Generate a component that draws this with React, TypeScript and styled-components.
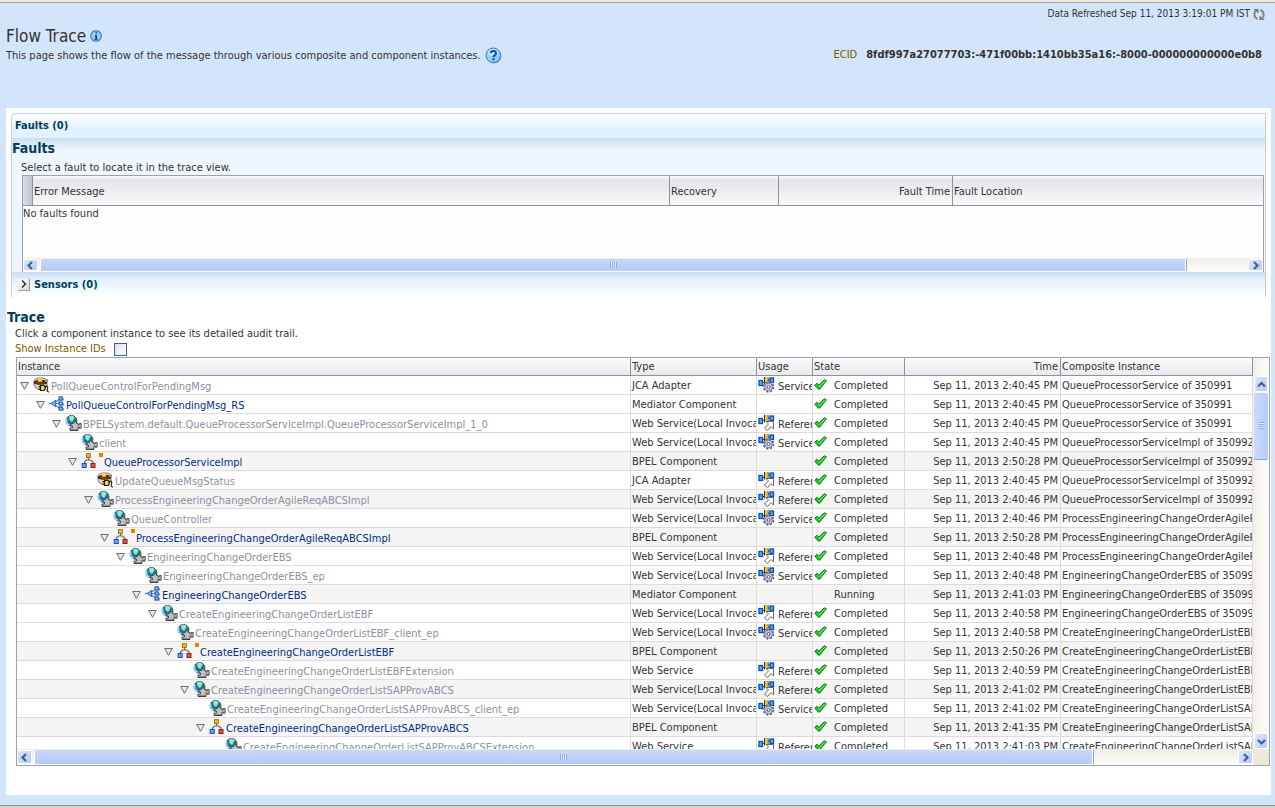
import React from 'react';
import styled, { createGlobalStyle } from 'styled-components';

const GlobalStyle = createGlobalStyle`
  *, *::before, *::after { box-sizing: border-box; }
  body {
    margin: 0;
    background: #d3e5fa;
    color: #333;
    font: 11px/14px "DejaVu Sans Condensed", "Noto Sans", sans-serif;
  }
  button {
    font: inherit;
    color: inherit;
    border: 0;
    padding: 0;
    margin: 0;
    background: none;
    cursor: pointer;
  }
  svg { display: block; flex: none; }
  h1, h2, h3, p { margin: 0; }
`;

/* ---------- page frame ---------- */

const Page = styled.div`
  display: flex;
  flex-direction: column;
  min-height: 100vh;
  border-top: 2px solid #ece9d8;
  border-bottom: 2px solid #d8d4c4;
`;

const Frame = styled.div`
  flex: 1;
  display: flex;
  flex-direction: column;
  border-top: 1px solid #a5a59c;
  border-bottom: 1px solid #8a8f94;
  padding: 0 4px 10px 6px;
`;

const Header = styled.header`
  display: flex;
  justify-content: space-between;
  height: 105px;
`;

const HeaderLeft = styled.div`
  padding-top: 22px;
`;

const HeaderRight = styled.div`
  display: flex;
  flex-direction: column;
  align-items: flex-end;
  gap: 26px;
  padding: 4px 6px 0 0;
`;

const Inline = styled.div<{ $gap: number }>`
  display: flex;
  align-items: center;
  gap: ${p => p.$gap}px;
`;

const Title = styled.h1`
  font: 17px/22px "DejaVu Sans Condensed", sans-serif;
`;

const Refreshed = styled.span`
  font-size: 10px;
`;

const EcidLine = styled.div`
  display: flex;
  gap: 9px;
  padding-right: 3px;
  line-height: 16px;
`;

const FieldLabel = styled.span`
  color: #7a5a00;
`;

const Panel = styled.main`
  flex: 1;
  background: #fff;
  padding: 5px 1px 28px 1px;
`;

/* ---------- faults ---------- */

const FaultsBox = styled.section`
  margin: 0 4px;
  border: 1px solid #c3d0df;
  border-bottom: 0;
  border-top-left-radius: 5px;
  background: #eff6fe;
`;

const BoxBar = styled.h3`
  height: 24px;
  padding-left: 3px;
  border-top-left-radius: 5px;
  font: bold 11px/24px "DejaVu Sans Condensed", sans-serif;
  color: #003d5b;
  background: linear-gradient(#fff, #e2f1fe 60%, #e2f1fe);
`;

const FaultsBody = styled.div`
  background: linear-gradient(#cadef1, #eff6fe 12px);
`;

const SectionTitle = styled.h2`
  font: bold 14px/20px "DejaVu Sans Condensed", sans-serif;
  color: #003d5b;
`;

const FaultsHint = styled.p`
  padding: 3px 0 0 9px;
`;

const TraceHint = styled.p`
  padding-left: 8px;
`;

const FaultsGrid = styled.div`
  margin: 0 1px 0 10px;
  border: 1px solid #9ba2ad;
  border-bottom: 0;
  background: #fdfdfb;
`;

const FaultsTable = styled.table`
  width: 100%;
  table-layout: fixed;
  border-collapse: separate;
  border-spacing: 0;
`;

const FaultsTh = styled.th<{ $end?: boolean }>`
  height: 30px;
  padding: 2px 2px 0 1px;
  font-weight: normal;
  text-align: ${p => (p.$end ? 'right' : 'left')};
  border-right: 1px solid #8d929b;
  border-bottom: 1px solid #8d929b;
  background: linear-gradient(#fafafb, #e4e5e9 15%, #f8f8f9);

  &:first-child { background: linear-gradient(90deg, #d9dce4, #bdc2cd); }
  &:last-child { border-right: 0; }
`;

const FaultsTd = styled.td`
  height: 52px;
  padding: 1px 0;
  vertical-align: top;
`;

const SensorsBar = styled.div`
  display: flex;
  align-items: center;
  gap: 4px;
  height: 25px;
  padding-left: 6px;
  background: linear-gradient(#c9dcee, #e3f1fd 8px, #fff);
`;

const Disclose = styled.button`
  display: grid;
  place-items: center;
  width: 12px;
  height: 12px;
  border-right: 1px solid #9a9a9a;
  border-bottom: 1px solid #9a9a9a;
  background: linear-gradient(135deg, #fff, #d8d8dc);
`;

const SensorsTitle = styled.h3`
  font: bold 11px/14px "DejaVu Sans Condensed", sans-serif;
  color: #003d5b;
`;

/* ---------- trace ---------- */

const TraceSection = styled.section`
  padding-top: 10px;
`;

const OptionRow = styled.label`
  display: flex;
  align-items: center;
  gap: 8px;
  height: 16px;
  padding-left: 8px;
`;

const Checkbox = styled.input`
  appearance: none;
  width: 13px;
  height: 13px;
  margin: 0;
  border: 1px solid #2f649c;
  background: linear-gradient(135deg, #dcdfe3, #fff);
`;

const TraceGrid = styled.div`
  margin: 0 0 0 9px;
  border: 1px solid #9ba2ad;
`;

const TraceView = styled.div`
  display: flex;
  height: 391px;
`;

const TableClip = styled.div`
  flex: 1;
  min-width: 0;
  overflow: hidden;
`;

const TraceTable = styled.table`
  width: 100%;
  table-layout: fixed;
  border-collapse: separate;
  border-spacing: 0;
`;

const Th = styled.th<{ $end?: boolean }>`
  height: 18px;
  padding: 1px 2px 0 1px;
  font-weight: normal;
  line-height: 16px;
  text-align: ${p => (p.$end ? 'right' : 'left')};
  border-right: 1px solid #8d929b;
  border-bottom: 1px solid #8d929b;
  background: linear-gradient(#fafafb, #e9eaee);
`;

const Tr = styled.tr<{ $shade?: boolean }>`
  background: ${p => (p.$shade ? '#f4f4f4' : '#fff')};
`;

const Td = styled.td<{ $end?: boolean }>`
  height: 19px;
  padding: 1px 2px 0 1px;
  line-height: 17px;
  white-space: nowrap;
  overflow: hidden;
  text-align: ${p => (p.$end ? 'right' : 'left')};
  border-right: 1px solid #dcdcdc;
  border-bottom: 1px solid #dcdcdc;
`;

const Node = styled.div<{ $level: number }>`
  display: flex;
  align-items: flex-start;
  height: 17px;
  padding-left: ${p => p.$level * 16}px;
`;

const Toggle = styled.button`
  display: grid;
  place-items: center;
  width: 12px;
  height: 18px;
  margin-right: 3px;
`;

const ToggleGap = styled.span`
  width: 15px;
`;

const Marker = styled.span`
  width: 4px;
  height: 4px;
  margin-left: 2px;
  background: #ef7d00;
`;

const NodeText = styled.span`
  padding: 2px 0 0 1px;
  line-height: 16px;
  color: #8b90a0;
`;

const NodeLink = styled.a`
  padding: 2px 0 0 1px;
  line-height: 16px;
  color: #002c87;
  text-decoration: none;
`;

const UsageCell = styled.div`
  display: flex;
  gap: 3px;
  height: 17px;
`;

const UsageText = styled.span`
  padding-top: 2px;
  line-height: 16px;
`;

const StateCell = styled.div`
  display: flex;
  align-items: center;
  gap: 5px;
  height: 17px;
`;

const StateIcon = styled.span`
  width: 15px;
  height: 14px;
`;

/* ---------- scroll bars ---------- */

const HBar = styled.div<{ $tall?: boolean }>`
  display: flex;
  align-items: stretch;
  height: ${p => (p.$tall ? 16 : 14)}px;
  padding: 1px 0;
  background: linear-gradient(#efede6, #fdfdfb);
`;

const VBar = styled.div`
  display: flex;
  flex-direction: column;
  width: 16px;
  padding: 18px 1px 0;
  background: linear-gradient(90deg, #f1efe6, #fdfdfa);
`;

const ScrollButton = styled.button`
  flex: none;
  display: grid;
  place-items: center;
  width: 15px;
  min-height: 12px;
  border: 1px solid #fff;
  border-radius: 2px;
  background: linear-gradient(135deg, #dbe5fd, #b4cbf5);
  ${VBar} & { width: 14px; height: 16px; }
`;

const HThumb = styled.div<{ $grow: number }>`
  flex: ${p => p.$grow} 1 0;
  display: grid;
  place-items: center;
  margin-left: 3px;
  border-right: 1px solid #7ba2e0;
  box-shadow: -1px 0 0 #fff, inset -1px 0 0 #fff;
  background: linear-gradient(#c9d7fc, #b5cbf7);
`;

const HRest = styled.div<{ $grow: number }>`
  flex: ${p => p.$grow} 1 0;
`;

const VThumb = styled.div`
  flex: 66 1 0;
  display: grid;
  place-items: center;
  margin-top: 1px;
  border-bottom: 1px solid #7ba2e0;
  border-radius: 2px;
  background: linear-gradient(90deg, #cbd9fd, #b7cdf9);
`;

const VRest = styled.div`
  flex: 275 1 0;
`;

const Corner = styled.div`
  width: 16px;
  margin: -1px 0;
  background: #ece9d8;
`;

/* ---------- drawings ---------- */

const arrowPaths = {
  left: 'M6 1L2.5 4.5L6 8',
  right: 'M3 1L6.5 4.5L3 8',
  up: 'M1 6.5L4.5 3L8 6.5',
  down: 'M1 3L4.5 6.5L8 3',
};

const Arrow = ({ dir }: { dir: keyof typeof arrowPaths }) => (
  <svg width="9" height="9" viewBox="0 0 9 9">
    <path d={arrowPaths[dir]} fill="none" stroke="#46608f" strokeWidth="2.2" />
  </svg>
);

const Grip = ({ vertical }: { vertical?: boolean }) => (
  <svg width="8" height="8" viewBox="0 0 8 8">
    <g transform={vertical ? 'rotate(90 4 4)' : undefined}>
      <path d="M.5 1v6M2.5 1v6M4.5 1v6M6.5 1v6" stroke="#8eabe8" />
      <path d="M1.5 1v6M3.5 1v6M5.5 1v6" stroke="#e6eefe" />
    </g>
  </svg>
);

const InfoIcon = () => (
  <svg width="12" height="12" viewBox="0 0 11 11">
    <circle cx="5.5" cy="5.5" r="4.8" fill="#9fd0f7" stroke="#3c86cf" strokeWidth="1.2" />
    <path d="M5 2h1.500v1.500H5zM4.500 4.500h2V8h.7v1H4V8h.8V5.500h-.3z" fill="#0b3f98" />
  </svg>
);

const HelpIcon = () => (
  <svg width="17" height="17" viewBox="0 0 17 17">
    <circle cx="9" cy="9.2" r="7.3" fill="#6d86a0" />
    <circle cx="8.3" cy="8.3" r="7.3" fill="#8fd0fb" stroke="#3a80c4" />
    <ellipse cx="8" cy="5.5" rx="5" ry="3.5" fill="#c8ebff" />
    <path d="M5.8 6.3C5.8 3.3 11 3.4 11 6.2C11 8.2 8.5 8 8.5 10.2" fill="none" stroke="#17479c" strokeWidth="2" />
    <path d="M7.5 11.3h2v2h-2z" fill="#17479c" />
  </svg>
);

const RefreshIcon = () => (
  <svg width="12" height="13" viewBox="0 0 12 13">
    <g fill="none" stroke="#858585" strokeWidth="2">
      <path d="M4.500 11C.7 9.500 .7 5 2.500 3" />
      <path d="M7.500 2C11.300 3.500 11.300 8 9.500 10" />
    </g>
    <path d="M.5 1h5v4.500zM11.500 12h-5V7.500z" fill="#777" />
  </svg>
);

const TriangleIcon = () => (
  <svg width="9" height="8" viewBox="0 0 9 8">
    <path d="M.7.5h7.6L4.500 7.300z" fill="#e4e8ec" stroke="#56616e" strokeWidth=".9" />
  </svg>
);

const AdapterIcon = () => (
  <svg width="17" height="16" viewBox="0 0 17 16">
    <path d="M1 3.500C3 0 12 0 14 3.500V9c-2 4.500-10 4.500-12 1C.8 8.500.8 5 1 3.500z" fill="#dcd8d0" stroke="#7c756c" />
    <path d="M1 4.500c3-2.500 10-2.500 13 0v2c-3 1.800-10 1.800-13 0z" fill="#43241a" />
    <path d="M3 5.500c3 1.500 6 1.500 9 0" stroke="#a33a1e" fill="none" />
    <path d="M7 0l1.200 1.800 2.300.2-1.700 1.500.5 2L7 4.500 4.700 5.500l.5-2L3.500 2l2.300-.2z" fill="#ffd42a" />
    <path d="M12 2h3v3h-3z" fill="#9a958c" />
    <path d="M7.500 8.500H10c3 0 3 5 0 5H7.500z" fill="#f6df4a" stroke="#1c1c1c" strokeWidth="1.200" />
    <path d="M5.500 9.700h2M5.500 12.200h2M12 10.500c1-3 3.500-1 2.500 1.500c-1 2 0 3 1.500 3" stroke="#1c1c1c" strokeWidth="1.200" fill="none" />
  </svg>
);

const MediatorIcon = () => (
  <svg width="16" height="16" viewBox="0 0 16 16">
    <path d="M4 7.500L11 3M4 7.500h7M4 7.500l7 5" stroke="#6d85a5" strokeWidth="1.200" />
    <path d="M0 7.500h4" stroke="#4f6f99" strokeWidth="1.200" />
    <path d="M6.700 4.300v6.400L2.300 7.500z" fill="#8dbaf0" stroke="#1b5fb8" />
    <g fill="#cfe4ff" stroke="#175ab8" strokeWidth="1.300">
      <rect x="10.200" y="1" width="3" height="3" />
      <rect x="10.200" y="6" width="3" height="3" />
      <rect x="10.200" y="11" width="3" height="3" />
    </g>
    <path d="M14.500 2v2.500M14.500 7v2.500M14.500 12v2.500" stroke="#8c9bb0" />
  </svg>
);

const ServiceIcon = () => (
  <svg width="17" height="16" viewBox="0 0 17 16">
    <circle cx="6.500" cy="5.800" r="5.400" fill="#1a70b4" stroke="#265a80" />
    <path d="M4 1.500C6 .3 9 .8 9.500 2.500L8.500 5 7 7 4.500 5z" fill="#9be9bd" />
    <path d="M8.500 4.500l2.500-1 .5 3.500-2 1.500z" fill="#1f8a3a" />
    <path d="M1.800 3.500C1 6 2 9 4.500 10.300" stroke="#a8dcf8" strokeWidth="1.600" fill="none" />
    <path d="M6 8.500h2.500V7h3v1.500H13V10h1.200V8.500h1.900v4.700h-1.900V12H13v3.300H5V13h2.500v-2H6z" fill="#c0c0c0" stroke="#4c4c4c" />
    <path d="M5 15.300h8" stroke="#333" />
  </svg>
);

const BpelIcon = () => (
  <svg width="16" height="16" viewBox="0 0 16 16">
    <path d="M7.500 4v3M3.500 11V9l2-2h4l2.500 2v2" fill="none" stroke="#666" strokeWidth="1.200" />
    <rect x="5.500" y=".7" width="3.800" height="3.600" fill="#ffc832" stroke="#9a6a00" />
    <rect x="1.200" y="10.500" width="4" height="4" fill="#6f9bff" stroke="#1f4fd0" />
    <rect x="10" y="10.500" width="4" height="4" fill="#e0564c" stroke="#8d1a1a" />
  </svg>
);

const UsageIcon = ({ kind }: { kind: 'Service' | 'Reference' }) => (
  <svg width="17" height="16" viewBox="0 0 17 16">
    <path d="M4.500 5.500h2M6.500 0v7.500M10 0v7.500M10 3h2" stroke="#333" fill="none" />
    <path d="M7.200 0h2.200v6.500H7.200z" fill="#f2c21a" />
    <rect x="1" y="3.500" width="3.500" height="5" fill="#5aaaf8" stroke="#0a50b0" strokeWidth="1.300" />
    <rect x="12" y="1" width="3.500" height="4.500" fill="#5aaaf8" stroke="#0a50b0" strokeWidth="1.300" />
    {kind === 'Service' ? (
      <>
        <circle cx="10.500" cy="10" r="4.800" fill="none" stroke="#5d5d82" strokeWidth="1.800" strokeDasharray="2.100 1.670" />
        <circle cx="10.500" cy="10" r="3.900" fill="#d0d0e6" stroke="#77779a" />
        <circle cx="10.500" cy="10" r="1.500" fill="#fff" stroke="#4f4f74" />
      </>
    ) : (
      <path d="M8 6.500h7.500V14l-2.500-2.500-3.500 4L6.500 13 10.500 9z" fill="#fff" stroke="#666" />
    )}
  </svg>
);

const CheckIcon = () => (
  <svg width="13" height="12" viewBox="0 0 13 12">
    <path d="M.8 6.300L3 4.200l1.800 2L10.200.8l2.200 1L5.600 10.200H4.500z" fill="#28c92c" stroke="#0c7a14" />
    <path d="M5 8L11 2" stroke="#86ee76" strokeWidth=".9" />
  </svg>
);

/* ---------- data ---------- */

type Kind = 'adapter' | 'mediator' | 'service' | 'bpel';

interface TraceRow {
  level: number;
  kind: Kind;
  name: string;
  type: string;
  usage?: 'Service' | 'Reference';
  time: string;
  composite: string;
  open?: boolean;
  marked?: boolean;
  shade?: boolean;
  running?: boolean;
}

const icons: Record<Kind, React.FC> = {
  adapter: AdapterIcon,
  mediator: MediatorIcon,
  service: ServiceIcon,
  bpel: BpelIcon,
};

const LOCAL = 'Web Service(Local Invocation)';
const AGILE = 'ProcessEngineeringChangeOrderAgileReqABCSImpl';
const EBF = 'CreateEngineeringChangeOrderListEBF';
const SAP = 'CreateEngineeringChangeOrderListSAPProvABCS';

const rows: TraceRow[] = [
  { level: 0, kind: 'adapter', open: true, name: 'PollQueueControlForPendingMsg', type: 'JCA Adapter', usage: 'Service', time: '2:40:45', composite: 'QueueProcessorService of 350991' },
  { level: 1, kind: 'mediator', open: true, name: 'PollQueueControlForPendingMsg_RS', type: 'Mediator Component', time: '2:40:45', composite: 'QueueProcessorService of 350991' },
  { level: 2, kind: 'service', open: true, name: 'BPELSystem.default.QueueProcessorServiceImpl.QueueProcessorServiceImpl_1_0', type: LOCAL, usage: 'Reference', time: '2:40:45', composite: 'QueueProcessorService of 350991' },
  { level: 3, kind: 'service', name: 'client', type: LOCAL, usage: 'Service', time: '2:40:45', composite: 'QueueProcessorServiceImpl of 350992' },
  { level: 3, kind: 'bpel', open: true, marked: true, shade: true, name: 'QueueProcessorServiceImpl', type: 'BPEL Component', time: '2:50:28', composite: 'QueueProcessorServiceImpl of 350992' },
  { level: 4, kind: 'adapter', name: 'UpdateQueueMsgStatus', type: 'JCA Adapter', usage: 'Reference', time: '2:40:45', composite: 'QueueProcessorServiceImpl of 350992' },
  { level: 4, kind: 'service', open: true, shade: true, name: AGILE, type: LOCAL, usage: 'Reference', time: '2:40:46', composite: 'QueueProcessorServiceImpl of 350992' },
  { level: 5, kind: 'service', name: 'QueueController', type: LOCAL, usage: 'Service', time: '2:40:46', composite: AGILE },
  { level: 5, kind: 'bpel', open: true, marked: true, shade: true, name: AGILE, type: 'BPEL Component', time: '2:50:28', composite: AGILE },
  { level: 6, kind: 'service', open: true, name: 'EngineeringChangeOrderEBS', type: LOCAL, usage: 'Reference', time: '2:40:48', composite: AGILE },
  { level: 7, kind: 'service', name: 'EngineeringChangeOrderEBS_ep', type: LOCAL, usage: 'Service', time: '2:40:48', composite: 'EngineeringChangeOrderEBS of 350994' },
  { level: 7, kind: 'mediator', open: true, shade: true, running: true, name: 'EngineeringChangeOrderEBS', type: 'Mediator Component', time: '2:41:03', composite: 'EngineeringChangeOrderEBS of 350994' },
  { level: 8, kind: 'service', open: true, name: EBF, type: LOCAL, usage: 'Reference', time: '2:40:58', composite: 'EngineeringChangeOrderEBS of 350994' },
  { level: 9, kind: 'service', name: EBF + '_client_ep', type: LOCAL, usage: 'Service', time: '2:40:58', composite: EBF },
  { level: 9, kind: 'bpel', open: true, marked: true, shade: true, name: EBF, type: 'BPEL Component', time: '2:50:26', composite: EBF },
  { level: 10, kind: 'service', name: EBF + 'Extension', type: 'Web Service', usage: 'Reference', time: '2:40:59', composite: EBF },
  { level: 10, kind: 'service', open: true, shade: true, name: SAP, type: LOCAL, usage: 'Reference', time: '2:41:02', composite: EBF },
  { level: 11, kind: 'service', name: SAP + '_client_ep', type: LOCAL, usage: 'Service', time: '2:41:02', composite: SAP },
  { level: 11, kind: 'bpel', open: true, shade: true, name: SAP, type: 'BPEL Component', time: '2:41:35', composite: SAP },
  { level: 12, kind: 'service', name: SAP + 'Extension', type: 'Web Service', usage: 'Reference', time: '2:41:03', composite: SAP },
];

const InstanceNode = ({ row }: { row: TraceRow }) => {
  const Icon = icons[row.kind];
  const linked = row.kind === 'bpel' || row.kind === 'mediator';
  return (
    <Node $level={row.level}>
      {row.open ? (
        <Toggle aria-label={'Collapse ' + row.name}>
          <TriangleIcon />
        </Toggle>
      ) : (
        <ToggleGap />
      )}
      <Icon />
      {row.marked && <Marker />}
      {linked ? <NodeLink href="#">{row.name}</NodeLink> : <NodeText>{row.name}</NodeText>}
    </Node>
  );
};

export default function App() {
  return (
    <>
      <GlobalStyle />
      <Page>
        <Frame>
          <Header>
            <HeaderLeft>
              <Inline $gap={4}>
                <Title>Flow Trace</Title>
                <button aria-label="Page information"><InfoIcon /></button>
              </Inline>
              <Inline $gap={4}>
                <p>This page shows the flow of the message through various composite and component instances.</p>
                <button aria-label="Help"><HelpIcon /></button>
              </Inline>
            </HeaderLeft>
            <HeaderRight>
              <Inline $gap={3}>
                <Refreshed>Data Refreshed Sep 11, 2013 3:19:01 PM IST</Refreshed>
                <button aria-label="Refresh"><RefreshIcon /></button>
              </Inline>
              <EcidLine>
                <FieldLabel>ECID</FieldLabel>
                <strong>8fdf997a27077703:-471f00bb:1410bb35a16:-8000-000000000000e0b8</strong>
              </EcidLine>
            </HeaderRight>
          </Header>

          <Panel>
            <FaultsBox>
              <BoxBar>Faults (0)</BoxBar>
              <FaultsBody>
                <SectionTitle>Faults</SectionTitle>
                <FaultsHint>Select a fault to locate it in the trace view.</FaultsHint>
                <FaultsGrid>
                  <FaultsTable>
                    <colgroup>
                      <col width="10" />
                      <col />
                      <col width="109" />
                      <col width="174" />
                      <col width="310" />
                    </colgroup>
                    <thead>
                      <tr>
                        <FaultsTh aria-label="Row selector" />
                        <FaultsTh>Error Message</FaultsTh>
                        <FaultsTh>Recovery</FaultsTh>
                        <FaultsTh $end>Fault Time</FaultsTh>
                        <FaultsTh>Fault Location</FaultsTh>
                      </tr>
                    </thead>
                    <tbody>
                      <tr><FaultsTd colSpan={5}>No faults found</FaultsTd></tr>
                    </tbody>
                  </FaultsTable>
                  <HBar>
                    <ScrollButton aria-label="Scroll faults left"><Arrow dir="left" /></ScrollButton>
                    <HThumb $grow={1146}><Grip /></HThumb>
                    <HRest $grow={61} />
                    <ScrollButton aria-label="Scroll faults right"><Arrow dir="right" /></ScrollButton>
                  </HBar>
                </FaultsGrid>
              </FaultsBody>
              <SensorsBar>
                <Disclose aria-label="Expand sensors">
                  <svg width="6" height="8" viewBox="0 0 6 8">
                    <path d="M1 .5L4.500 4L1 7.500" fill="none" stroke="#222" strokeWidth="1.300" />
                  </svg>
                </Disclose>
                <SensorsTitle>Sensors (0)</SensorsTitle>
              </SensorsBar>
            </FaultsBox>

            <TraceSection>
              <SectionTitle>Trace</SectionTitle>
              <TraceHint>Click a component instance to see its detailed audit trail.</TraceHint>
              <OptionRow>
                <FieldLabel>Show Instance IDs</FieldLabel>
                <Checkbox type="checkbox" />
              </OptionRow>
              <TraceGrid>
                <TraceView>
                  <TableClip>
                    <TraceTable>
                      <colgroup>
                        <col />
                        <col width="126" />
                        <col width="56" />
                        <col width="92" />
                        <col width="156" />
                        <col width="192" />
                      </colgroup>
                      <thead>
                        <tr>
                          <Th>Instance</Th>
                          <Th>Type</Th>
                          <Th>Usage</Th>
                          <Th>State</Th>
                          <Th $end>Time</Th>
                          <Th>Composite Instance</Th>
                        </tr>
                      </thead>
                      <tbody>
                        {rows.map((row, i) => (
                          <Tr key={i} $shade={row.shade}>
                            <Td><InstanceNode row={row} /></Td>
                            <Td>{row.type}</Td>
                            <Td>
                              {row.usage && (
                                <UsageCell>
                                  <UsageIcon kind={row.usage} />
                                  <UsageText>{row.usage}</UsageText>
                                </UsageCell>
                              )}
                            </Td>
                            <Td>
                              <StateCell>
                                <StateIcon>{!row.running && <CheckIcon />}</StateIcon>
                                {row.running ? 'Running' : 'Completed'}
                              </StateCell>
                            </Td>
                            <Td $end>{'Sep 11, 2013 ' + row.time + ' PM'}</Td>
                            <Td>{row.composite}</Td>
                          </Tr>
                        ))}
                      </tbody>
                    </TraceTable>
                  </TableClip>
                  <VBar>
                    <ScrollButton aria-label="Scroll trace up"><Arrow dir="up" /></ScrollButton>
                    <VThumb><Grip vertical /></VThumb>
                    <VRest />
                    <ScrollButton aria-label="Scroll trace down"><Arrow dir="down" /></ScrollButton>
                  </VBar>
                </TraceView>
                <HBar $tall>
                  <ScrollButton aria-label="Scroll trace left"><Arrow dir="left" /></ScrollButton>
                  <HThumb $grow={1057}><Grip /></HThumb>
                  <HRest $grow={144} />
                  <ScrollButton aria-label="Scroll trace right"><Arrow dir="right" /></ScrollButton>
                  <Corner />
                </HBar>
              </TraceGrid>
            </TraceSection>
          </Panel>
        </Frame>
      </Page>
    </>
  );
}
